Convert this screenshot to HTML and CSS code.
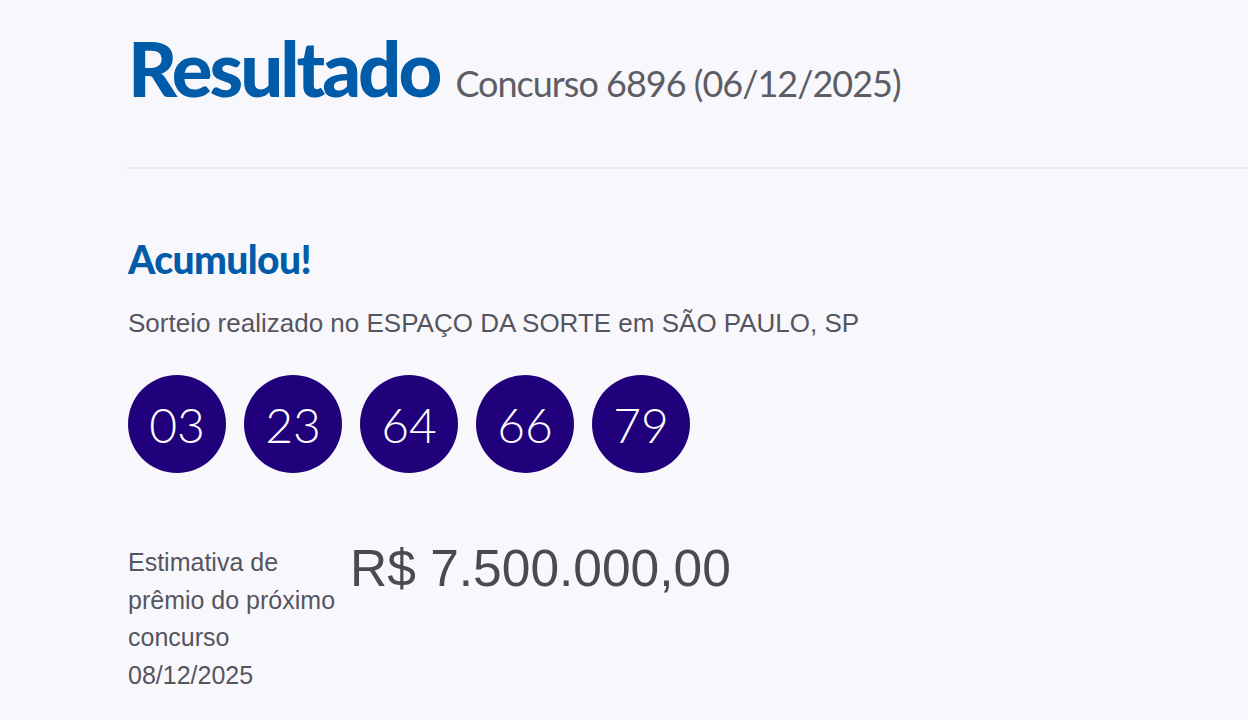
FILE: index.html
```html
<!DOCTYPE html>
<html lang="pt-BR">
<head>
<meta charset="utf-8">
<title>Resultado</title>
<link rel="stylesheet" href="styles.css">
</head>
<body>
<main class="page">
  <header class="title-row">
    <h1 class="title">Resultado</h1>
    <span class="concurso">Concurso 6896 (06/12/2025)</span>
  </header>
  <hr class="divider">
  <section class="result">
    <h2 class="status">Acumulou!</h2>
    <p class="local">Sorteio realizado no ESPAÇO DA SORTE em SÃO PAULO, SP</p>
    <ul class="balls">
      <li class="ball">03</li>
      <li class="ball">23</li>
      <li class="ball">64</li>
      <li class="ball">66</li>
      <li class="ball">79</li>
    </ul>
    <div class="prize">
      <p class="prize-label">Estimativa de prêmio do próximo concurso 08/12/2025</p>
      <p class="prize-value">R$ 7.500.000,00</p>
    </div>
  </section>
</main>
</body>
</html>
```

FILE: styles.css
```css
html, body {
  margin: 0;
  padding: 0;
  background: #f8f8fc;
}
body {
  font-family: "Liberation Sans", Arial, sans-serif;
  color: #555560;
}
.page {
  padding: 30px 0 0 126px;
}
.title-row {
  display: flex;
  align-items: baseline;
  gap: 16px;
  padding-left: 2px;
  height: 95px;
}
.title {
  margin: 0;
  font-family: "Lato", sans-serif;
  font-weight: 900;
  font-size: 76px;
  letter-spacing: -3px;
  color: #005ca9;
  line-height: 1;
}
.concurso {
  font-family: "Lato", sans-serif;
  font-weight: 400;
  font-size: 36px;
  letter-spacing: -1px;
  color: #5d5d66;
}
.divider {
  margin: 42px 0 0;
  border: 0;
  border-top: 2px solid #eaeaf0;
}
.result {
  padding-left: 2px;
}
.status {
  margin: 68px 0 0;
  font-family: "Lato", sans-serif;
  font-weight: 900;
  font-size: 39px;
  letter-spacing: -0.6px;
  color: #005ca9;
  line-height: 44px;
}
.local {
  margin: 27px 0 0;
  font-size: 26px;
  line-height: 30px;
  color: #555560;
}
.balls {
  list-style: none;
  margin: 37px 0 0;
  padding: 0;
  display: flex;
  gap: 18px;
}
.ball {
  width: 98px;
  height: 98px;
  border-radius: 50%;
  background: #21007c;
  color: #ffffff;
  display: flex;
  align-items: center;
  justify-content: center;
  font-family: "Lato", sans-serif;
  font-weight: 300;
  font-size: 48px;
}
.prize {
  display: flex;
  align-items: flex-start;
  gap: 6px;
  margin-top: 65px;
}
.prize-label {
  margin: 6px 0 0;
  width: 216px;
  font-size: 25px;
  line-height: 37.5px;
  color: #555560;
}
.prize-value {
  margin: 0;
  font-size: 51.5px;
  line-height: 60px;
  color: #4a4a55;
}
```
